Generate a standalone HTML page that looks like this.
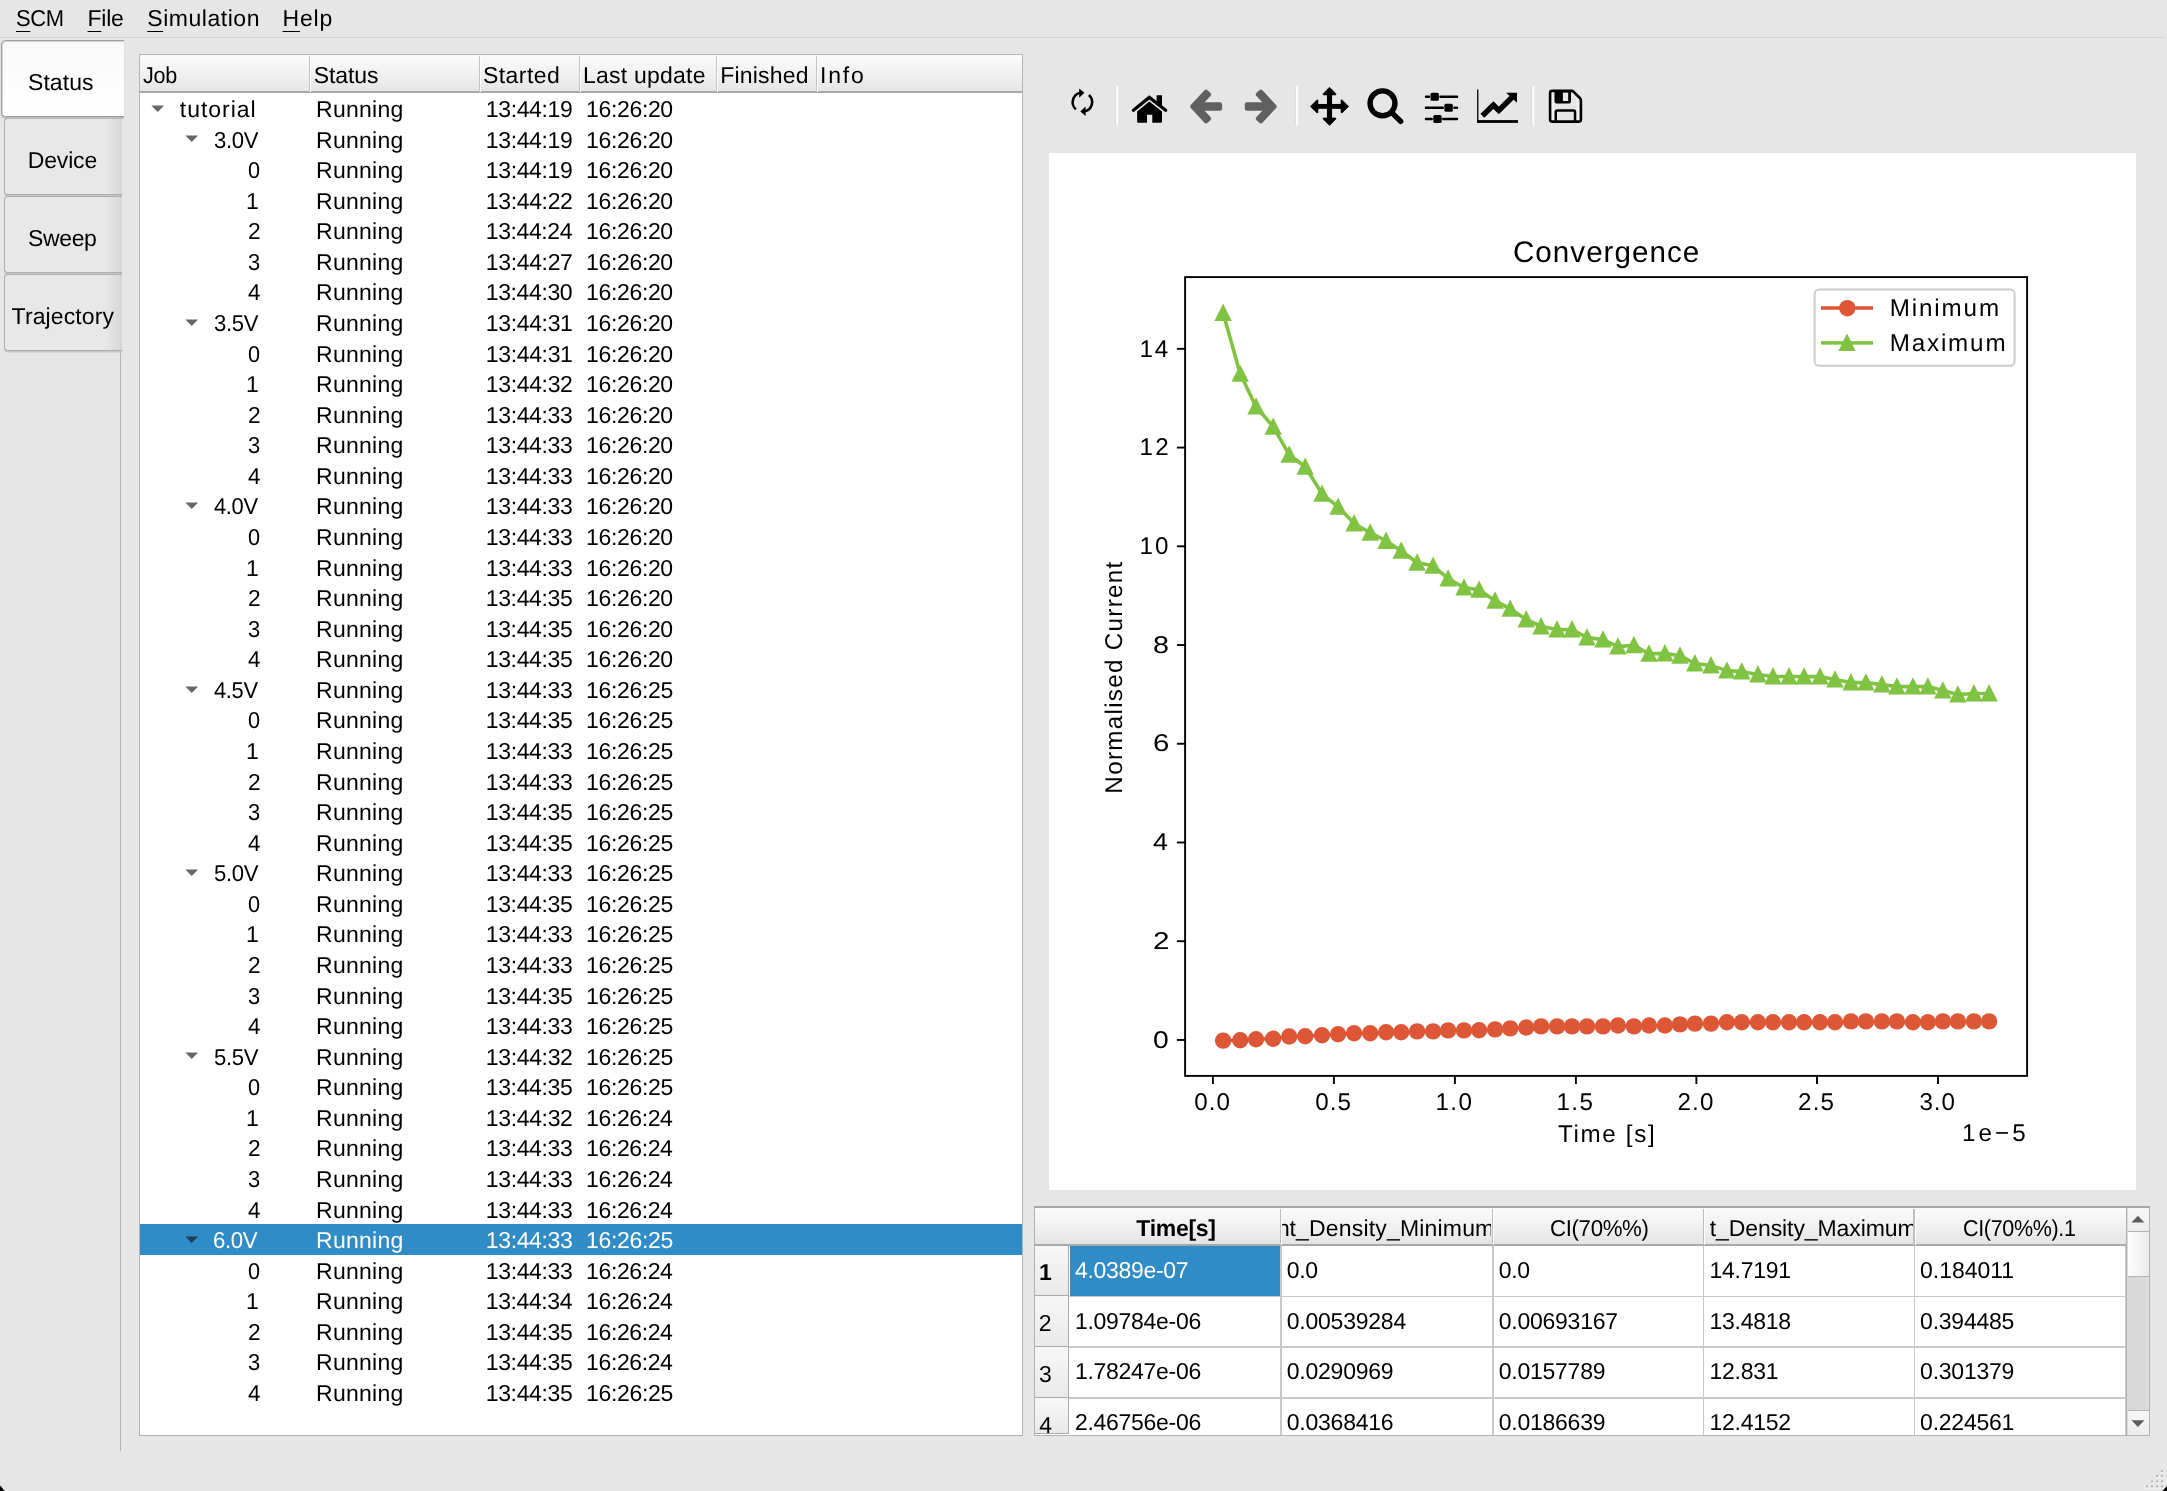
<!DOCTYPE html>
<html><head><meta charset="utf-8"><title>SCM</title>
<style>
html,body{margin:0;padding:0;background:#e6e6e6;}
body{will-change:transform;text-rendering:geometricPrecision;width:2167px;height:1491px;overflow:hidden;background:#e6e6e6;position:relative;font-family:"Liberation Sans",sans-serif;color:#000;}
.t{position:absolute;white-space:pre;}
.a{position:absolute;}
u{text-decoration:underline;text-decoration-thickness:1.4px;text-underline-offset:5.2px;}
</style></head><body>

<div class="a" style="left:0;top:37px;width:2166px;height:1px;background:#d4d4d4"></div>
<div class="t" style="left:16.41px;top:3.23px;font-size:23.0px;line-height:30px;letter-spacing:-0.350px;transform:scaleX(0.9549);transform-origin:0 0;"><u>S</u>CM</div>
<div class="t" style="left:87.56px;top:3.23px;font-size:23.0px;line-height:30px;letter-spacing:-0.237px;"><u>F</u>ile</div>
<div class="t" style="left:147.27px;top:3.23px;font-size:23.0px;line-height:30px;letter-spacing:0.536px;"><u>S</u>imulation</div>
<div class="t" style="left:282.56px;top:3.23px;font-size:23.0px;line-height:30px;letter-spacing:0.832px;"><u>H</u>elp</div>
<div class="a" style="left:120.2px;top:117px;width:1.1px;height:1334px;background:#b2b2b2"></div>
<div class="a" style="left:4px;top:118.4px;width:116.5px;height:74.5px;border:1px solid #adadad;border-right:none;border-radius:4px 0 0 4px;background:linear-gradient(90deg,#e8e8e8 0,#e8e8e8 86%,#d6d6d6 100%);box-shadow:0 1.5px 0 #c6c6c6"></div>
<div class="t" style="left:27.76px;top:144.83px;font-size:23.0px;line-height:30px;letter-spacing:-0.169px;">Device</div>
<div class="a" style="left:4px;top:196.4px;width:116.5px;height:74.5px;border:1px solid #adadad;border-right:none;border-radius:4px 0 0 4px;background:linear-gradient(90deg,#e8e8e8 0,#e8e8e8 86%,#d6d6d6 100%);box-shadow:0 1.5px 0 #c6c6c6"></div>
<div class="t" style="left:28.07px;top:222.83px;font-size:23.0px;line-height:30px;letter-spacing:-0.392px;">Sweep</div>
<div class="a" style="left:4px;top:274.4px;width:116.5px;height:74.5px;border:1px solid #adadad;border-right:none;border-radius:4px 0 0 4px;background:linear-gradient(90deg,#e8e8e8 0,#e8e8e8 86%,#d6d6d6 100%);box-shadow:0 1.5px 0 #c6c6c6"></div>
<div class="t" style="left:11.59px;top:300.83px;font-size:23.0px;line-height:30px;letter-spacing:0.110px;">Trajectory</div>
<div class="a" style="left:1px;top:40px;width:122px;height:75px;border:1px solid #9e9e9e;border-right:none;border-radius:5px 0 0 5px;background:linear-gradient(180deg,#f9f9f9,#ffffff);box-shadow:0 1.5px 1px #bdbdbd, inset 1px 1px 0 rgba(150,150,150,.35)"></div>
<div class="t" style="left:27.96px;top:66.83px;font-size:23.0px;line-height:30px;letter-spacing:0.087px;">Status</div>
<div class="a" style="left:139px;top:54px;width:882px;height:1379.6px;border:1px solid #b4b4b4;background:#fff"></div>
<div class="a" style="left:140px;top:55px;width:882px;height:36px;background:linear-gradient(180deg,#fbfbfb 0,#f1f1f1 50%,#e6e6e6 100%);border-bottom:2px solid #a8a8a8"></div>
<div class="a" style="left:308.8px;top:56px;width:1px;height:36px;background:#c4c4c4"></div>
<div class="a" style="left:309.8px;top:56px;width:1px;height:36px;background:#fdfdfd"></div>
<div class="a" style="left:478.5px;top:56px;width:1px;height:36px;background:#c4c4c4"></div>
<div class="a" style="left:479.5px;top:56px;width:1px;height:36px;background:#fdfdfd"></div>
<div class="a" style="left:579.0px;top:56px;width:1px;height:36px;background:#c4c4c4"></div>
<div class="a" style="left:580.0px;top:56px;width:1px;height:36px;background:#fdfdfd"></div>
<div class="a" style="left:715.9px;top:56px;width:1px;height:36px;background:#c4c4c4"></div>
<div class="a" style="left:716.9px;top:56px;width:1px;height:36px;background:#fdfdfd"></div>
<div class="a" style="left:815.9px;top:56px;width:1px;height:36px;background:#c4c4c4"></div>
<div class="a" style="left:816.9px;top:56px;width:1px;height:36px;background:#fdfdfd"></div>
<div class="t" style="left:142.88px;top:60.03px;font-size:23.0px;line-height:30px;letter-spacing:-0.350px;transform:scaleX(0.9383);transform-origin:0 0;">Job</div>
<div class="t" style="left:313.76px;top:60.03px;font-size:23.0px;line-height:30px;letter-spacing:-0.073px;">Status</div>
<div class="t" style="left:482.96px;top:60.03px;font-size:23.0px;line-height:30px;letter-spacing:0.459px;">Started</div>
<div class="t" style="left:582.96px;top:60.03px;font-size:23.0px;line-height:30px;letter-spacing:0.234px;">Last update</div>
<div class="t" style="left:720.36px;top:60.03px;font-size:23.0px;line-height:30px;letter-spacing:0.162px;">Finished</div>
<div class="t" style="left:820.03px;top:60.03px;font-size:23.0px;line-height:30px;letter-spacing:1.812px;">Info</div>
<svg class="a" style="left:150.2px;top:104.80px" width="15" height="8"><path d="M1.4 0.4 L14.1 0.4 L7.75 6.9 Z" fill="#666"/></svg>
<div class="t" style="left:179.85px;top:94.03px;font-size:23.0px;line-height:30px;letter-spacing:0.969px;">tutorial</div>
<div class="t" style="left:316.01px;top:94.03px;font-size:23.0px;line-height:30px;letter-spacing:0.275px;">Running</div>
<div class="t" style="left:485.77px;top:94.03px;font-size:23.0px;line-height:30px;letter-spacing:-0.353px;">13:44:19</div>
<div class="t" style="left:586.12px;top:94.03px;font-size:23.0px;line-height:30px;letter-spacing:-0.356px;">16:26:20</div>
<svg class="a" style="left:184.15px;top:135.37px" width="15" height="8"><path d="M1.4 0.4 L14.1 0.4 L7.75 6.9 Z" fill="#666"/></svg>
<div class="t" style="left:213.57px;top:124.60px;font-size:23.0px;line-height:30px;letter-spacing:-0.350px;transform:scaleX(0.9593);transform-origin:0 0;">3.0V</div>
<div class="t" style="left:316.01px;top:124.60px;font-size:23.0px;line-height:30px;letter-spacing:0.275px;">Running</div>
<div class="t" style="left:485.77px;top:124.60px;font-size:23.0px;line-height:30px;letter-spacing:-0.353px;">13:44:19</div>
<div class="t" style="left:586.12px;top:124.60px;font-size:23.0px;line-height:30px;letter-spacing:-0.356px;">16:26:20</div>
<div class="t" style="left:247.99px;top:155.17px;font-size:23.0px;line-height:30px;transform:scaleX(0.9420);transform-origin:0 0;">0</div>
<div class="t" style="left:316.01px;top:155.17px;font-size:23.0px;line-height:30px;letter-spacing:0.275px;">Running</div>
<div class="t" style="left:485.77px;top:155.17px;font-size:23.0px;line-height:30px;letter-spacing:-0.353px;">13:44:19</div>
<div class="t" style="left:586.12px;top:155.17px;font-size:23.0px;line-height:30px;letter-spacing:-0.356px;">16:26:20</div>
<div class="t" style="left:245.88px;top:185.74px;font-size:23.0px;line-height:30px;">1</div>
<div class="t" style="left:316.01px;top:185.74px;font-size:23.0px;line-height:30px;letter-spacing:0.275px;">Running</div>
<div class="t" style="left:485.77px;top:185.74px;font-size:23.0px;line-height:30px;letter-spacing:-0.344px;">13:44:22</div>
<div class="t" style="left:586.12px;top:185.74px;font-size:23.0px;line-height:30px;letter-spacing:-0.356px;">16:26:20</div>
<div class="t" style="left:247.66px;top:216.31px;font-size:23.0px;line-height:30px;transform:scaleX(0.9884);transform-origin:0 0;">2</div>
<div class="t" style="left:316.01px;top:216.31px;font-size:23.0px;line-height:30px;letter-spacing:0.275px;">Running</div>
<div class="t" style="left:485.77px;top:216.31px;font-size:23.0px;line-height:30px;letter-spacing:-0.410px;">13:44:24</div>
<div class="t" style="left:586.12px;top:216.31px;font-size:23.0px;line-height:30px;letter-spacing:-0.356px;">16:26:20</div>
<div class="t" style="left:247.98px;top:246.88px;font-size:23.0px;line-height:30px;transform:scaleX(0.9519);transform-origin:0 0;">3</div>
<div class="t" style="left:316.01px;top:246.88px;font-size:23.0px;line-height:30px;letter-spacing:0.275px;">Running</div>
<div class="t" style="left:485.77px;top:246.88px;font-size:23.0px;line-height:30px;letter-spacing:-0.344px;">13:44:27</div>
<div class="t" style="left:586.12px;top:246.88px;font-size:23.0px;line-height:30px;letter-spacing:-0.356px;">16:26:20</div>
<div class="t" style="left:247.80px;top:277.45px;font-size:23.0px;line-height:30px;transform:scaleX(0.9729);transform-origin:0 0;">4</div>
<div class="t" style="left:316.01px;top:277.45px;font-size:23.0px;line-height:30px;letter-spacing:0.275px;">Running</div>
<div class="t" style="left:485.77px;top:277.45px;font-size:23.0px;line-height:30px;letter-spacing:-0.377px;">13:44:30</div>
<div class="t" style="left:586.12px;top:277.45px;font-size:23.0px;line-height:30px;letter-spacing:-0.356px;">16:26:20</div>
<svg class="a" style="left:184.15px;top:318.79px" width="15" height="8"><path d="M1.4 0.4 L14.1 0.4 L7.75 6.9 Z" fill="#666"/></svg>
<div class="t" style="left:213.57px;top:308.02px;font-size:23.0px;line-height:30px;letter-spacing:-0.350px;transform:scaleX(0.9593);transform-origin:0 0;">3.5V</div>
<div class="t" style="left:316.01px;top:308.02px;font-size:23.0px;line-height:30px;letter-spacing:0.275px;">Running</div>
<div class="t" style="left:485.77px;top:308.02px;font-size:23.0px;line-height:30px;letter-spacing:-0.344px;">13:44:31</div>
<div class="t" style="left:586.12px;top:308.02px;font-size:23.0px;line-height:30px;letter-spacing:-0.356px;">16:26:20</div>
<div class="t" style="left:247.99px;top:338.59px;font-size:23.0px;line-height:30px;transform:scaleX(0.9420);transform-origin:0 0;">0</div>
<div class="t" style="left:316.01px;top:338.59px;font-size:23.0px;line-height:30px;letter-spacing:0.275px;">Running</div>
<div class="t" style="left:485.77px;top:338.59px;font-size:23.0px;line-height:30px;letter-spacing:-0.344px;">13:44:31</div>
<div class="t" style="left:586.12px;top:338.59px;font-size:23.0px;line-height:30px;letter-spacing:-0.356px;">16:26:20</div>
<div class="t" style="left:245.88px;top:369.16px;font-size:23.0px;line-height:30px;">1</div>
<div class="t" style="left:316.01px;top:369.16px;font-size:23.0px;line-height:30px;letter-spacing:0.275px;">Running</div>
<div class="t" style="left:485.77px;top:369.16px;font-size:23.0px;line-height:30px;letter-spacing:-0.344px;">13:44:32</div>
<div class="t" style="left:586.12px;top:369.16px;font-size:23.0px;line-height:30px;letter-spacing:-0.356px;">16:26:20</div>
<div class="t" style="left:247.66px;top:399.73px;font-size:23.0px;line-height:30px;transform:scaleX(0.9884);transform-origin:0 0;">2</div>
<div class="t" style="left:316.01px;top:399.73px;font-size:23.0px;line-height:30px;letter-spacing:0.275px;">Running</div>
<div class="t" style="left:485.77px;top:399.73px;font-size:23.0px;line-height:30px;letter-spacing:-0.361px;">13:44:33</div>
<div class="t" style="left:586.12px;top:399.73px;font-size:23.0px;line-height:30px;letter-spacing:-0.356px;">16:26:20</div>
<div class="t" style="left:247.98px;top:430.30px;font-size:23.0px;line-height:30px;transform:scaleX(0.9519);transform-origin:0 0;">3</div>
<div class="t" style="left:316.01px;top:430.30px;font-size:23.0px;line-height:30px;letter-spacing:0.275px;">Running</div>
<div class="t" style="left:485.77px;top:430.30px;font-size:23.0px;line-height:30px;letter-spacing:-0.361px;">13:44:33</div>
<div class="t" style="left:586.12px;top:430.30px;font-size:23.0px;line-height:30px;letter-spacing:-0.356px;">16:26:20</div>
<div class="t" style="left:247.80px;top:460.87px;font-size:23.0px;line-height:30px;transform:scaleX(0.9729);transform-origin:0 0;">4</div>
<div class="t" style="left:316.01px;top:460.87px;font-size:23.0px;line-height:30px;letter-spacing:0.275px;">Running</div>
<div class="t" style="left:485.77px;top:460.87px;font-size:23.0px;line-height:30px;letter-spacing:-0.361px;">13:44:33</div>
<div class="t" style="left:586.12px;top:460.87px;font-size:23.0px;line-height:30px;letter-spacing:-0.356px;">16:26:20</div>
<svg class="a" style="left:184.15px;top:502.21px" width="15" height="8"><path d="M1.4 0.4 L14.1 0.4 L7.75 6.9 Z" fill="#666"/></svg>
<div class="t" style="left:213.91px;top:491.44px;font-size:23.0px;line-height:30px;letter-spacing:-0.350px;transform:scaleX(0.9520);transform-origin:0 0;">4.0V</div>
<div class="t" style="left:316.01px;top:491.44px;font-size:23.0px;line-height:30px;letter-spacing:0.275px;">Running</div>
<div class="t" style="left:485.77px;top:491.44px;font-size:23.0px;line-height:30px;letter-spacing:-0.361px;">13:44:33</div>
<div class="t" style="left:586.12px;top:491.44px;font-size:23.0px;line-height:30px;letter-spacing:-0.356px;">16:26:20</div>
<div class="t" style="left:247.99px;top:522.01px;font-size:23.0px;line-height:30px;transform:scaleX(0.9420);transform-origin:0 0;">0</div>
<div class="t" style="left:316.01px;top:522.01px;font-size:23.0px;line-height:30px;letter-spacing:0.275px;">Running</div>
<div class="t" style="left:485.77px;top:522.01px;font-size:23.0px;line-height:30px;letter-spacing:-0.361px;">13:44:33</div>
<div class="t" style="left:586.12px;top:522.01px;font-size:23.0px;line-height:30px;letter-spacing:-0.356px;">16:26:20</div>
<div class="t" style="left:245.88px;top:552.58px;font-size:23.0px;line-height:30px;">1</div>
<div class="t" style="left:316.01px;top:552.58px;font-size:23.0px;line-height:30px;letter-spacing:0.275px;">Running</div>
<div class="t" style="left:485.77px;top:552.58px;font-size:23.0px;line-height:30px;letter-spacing:-0.361px;">13:44:33</div>
<div class="t" style="left:586.12px;top:552.58px;font-size:23.0px;line-height:30px;letter-spacing:-0.356px;">16:26:20</div>
<div class="t" style="left:247.66px;top:583.15px;font-size:23.0px;line-height:30px;transform:scaleX(0.9884);transform-origin:0 0;">2</div>
<div class="t" style="left:316.01px;top:583.15px;font-size:23.0px;line-height:30px;letter-spacing:0.275px;">Running</div>
<div class="t" style="left:485.77px;top:583.15px;font-size:23.0px;line-height:30px;letter-spacing:-0.369px;">13:44:35</div>
<div class="t" style="left:586.12px;top:583.15px;font-size:23.0px;line-height:30px;letter-spacing:-0.356px;">16:26:20</div>
<div class="t" style="left:247.98px;top:613.72px;font-size:23.0px;line-height:30px;transform:scaleX(0.9519);transform-origin:0 0;">3</div>
<div class="t" style="left:316.01px;top:613.72px;font-size:23.0px;line-height:30px;letter-spacing:0.275px;">Running</div>
<div class="t" style="left:485.77px;top:613.72px;font-size:23.0px;line-height:30px;letter-spacing:-0.369px;">13:44:35</div>
<div class="t" style="left:586.12px;top:613.72px;font-size:23.0px;line-height:30px;letter-spacing:-0.356px;">16:26:20</div>
<div class="t" style="left:247.80px;top:644.29px;font-size:23.0px;line-height:30px;transform:scaleX(0.9729);transform-origin:0 0;">4</div>
<div class="t" style="left:316.01px;top:644.29px;font-size:23.0px;line-height:30px;letter-spacing:0.275px;">Running</div>
<div class="t" style="left:485.77px;top:644.29px;font-size:23.0px;line-height:30px;letter-spacing:-0.369px;">13:44:35</div>
<div class="t" style="left:586.12px;top:644.29px;font-size:23.0px;line-height:30px;letter-spacing:-0.356px;">16:26:20</div>
<svg class="a" style="left:184.15px;top:685.63px" width="15" height="8"><path d="M1.4 0.4 L14.1 0.4 L7.75 6.9 Z" fill="#666"/></svg>
<div class="t" style="left:213.91px;top:674.86px;font-size:23.0px;line-height:30px;letter-spacing:-0.350px;transform:scaleX(0.9520);transform-origin:0 0;">4.5V</div>
<div class="t" style="left:316.01px;top:674.86px;font-size:23.0px;line-height:30px;letter-spacing:0.275px;">Running</div>
<div class="t" style="left:485.77px;top:674.86px;font-size:23.0px;line-height:30px;letter-spacing:-0.361px;">13:44:33</div>
<div class="t" style="left:586.12px;top:674.86px;font-size:23.0px;line-height:30px;letter-spacing:-0.348px;">16:26:25</div>
<div class="t" style="left:247.99px;top:705.43px;font-size:23.0px;line-height:30px;transform:scaleX(0.9420);transform-origin:0 0;">0</div>
<div class="t" style="left:316.01px;top:705.43px;font-size:23.0px;line-height:30px;letter-spacing:0.275px;">Running</div>
<div class="t" style="left:485.77px;top:705.43px;font-size:23.0px;line-height:30px;letter-spacing:-0.369px;">13:44:35</div>
<div class="t" style="left:586.12px;top:705.43px;font-size:23.0px;line-height:30px;letter-spacing:-0.348px;">16:26:25</div>
<div class="t" style="left:245.88px;top:736.00px;font-size:23.0px;line-height:30px;">1</div>
<div class="t" style="left:316.01px;top:736.00px;font-size:23.0px;line-height:30px;letter-spacing:0.275px;">Running</div>
<div class="t" style="left:485.77px;top:736.00px;font-size:23.0px;line-height:30px;letter-spacing:-0.361px;">13:44:33</div>
<div class="t" style="left:586.12px;top:736.00px;font-size:23.0px;line-height:30px;letter-spacing:-0.348px;">16:26:25</div>
<div class="t" style="left:247.66px;top:766.57px;font-size:23.0px;line-height:30px;transform:scaleX(0.9884);transform-origin:0 0;">2</div>
<div class="t" style="left:316.01px;top:766.57px;font-size:23.0px;line-height:30px;letter-spacing:0.275px;">Running</div>
<div class="t" style="left:485.77px;top:766.57px;font-size:23.0px;line-height:30px;letter-spacing:-0.361px;">13:44:33</div>
<div class="t" style="left:586.12px;top:766.57px;font-size:23.0px;line-height:30px;letter-spacing:-0.348px;">16:26:25</div>
<div class="t" style="left:247.98px;top:797.14px;font-size:23.0px;line-height:30px;transform:scaleX(0.9519);transform-origin:0 0;">3</div>
<div class="t" style="left:316.01px;top:797.14px;font-size:23.0px;line-height:30px;letter-spacing:0.275px;">Running</div>
<div class="t" style="left:485.77px;top:797.14px;font-size:23.0px;line-height:30px;letter-spacing:-0.369px;">13:44:35</div>
<div class="t" style="left:586.12px;top:797.14px;font-size:23.0px;line-height:30px;letter-spacing:-0.348px;">16:26:25</div>
<div class="t" style="left:247.80px;top:827.71px;font-size:23.0px;line-height:30px;transform:scaleX(0.9729);transform-origin:0 0;">4</div>
<div class="t" style="left:316.01px;top:827.71px;font-size:23.0px;line-height:30px;letter-spacing:0.275px;">Running</div>
<div class="t" style="left:485.77px;top:827.71px;font-size:23.0px;line-height:30px;letter-spacing:-0.369px;">13:44:35</div>
<div class="t" style="left:586.12px;top:827.71px;font-size:23.0px;line-height:30px;letter-spacing:-0.348px;">16:26:25</div>
<svg class="a" style="left:184.15px;top:869.05px" width="15" height="8"><path d="M1.4 0.4 L14.1 0.4 L7.75 6.9 Z" fill="#666"/></svg>
<div class="t" style="left:213.52px;top:858.28px;font-size:23.0px;line-height:30px;letter-spacing:-0.350px;transform:scaleX(0.9605);transform-origin:0 0;">5.0V</div>
<div class="t" style="left:316.01px;top:858.28px;font-size:23.0px;line-height:30px;letter-spacing:0.275px;">Running</div>
<div class="t" style="left:485.77px;top:858.28px;font-size:23.0px;line-height:30px;letter-spacing:-0.361px;">13:44:33</div>
<div class="t" style="left:586.12px;top:858.28px;font-size:23.0px;line-height:30px;letter-spacing:-0.348px;">16:26:25</div>
<div class="t" style="left:247.99px;top:888.85px;font-size:23.0px;line-height:30px;transform:scaleX(0.9420);transform-origin:0 0;">0</div>
<div class="t" style="left:316.01px;top:888.85px;font-size:23.0px;line-height:30px;letter-spacing:0.275px;">Running</div>
<div class="t" style="left:485.77px;top:888.85px;font-size:23.0px;line-height:30px;letter-spacing:-0.369px;">13:44:35</div>
<div class="t" style="left:586.12px;top:888.85px;font-size:23.0px;line-height:30px;letter-spacing:-0.348px;">16:26:25</div>
<div class="t" style="left:245.88px;top:919.42px;font-size:23.0px;line-height:30px;">1</div>
<div class="t" style="left:316.01px;top:919.42px;font-size:23.0px;line-height:30px;letter-spacing:0.275px;">Running</div>
<div class="t" style="left:485.77px;top:919.42px;font-size:23.0px;line-height:30px;letter-spacing:-0.361px;">13:44:33</div>
<div class="t" style="left:586.12px;top:919.42px;font-size:23.0px;line-height:30px;letter-spacing:-0.348px;">16:26:25</div>
<div class="t" style="left:247.66px;top:949.99px;font-size:23.0px;line-height:30px;transform:scaleX(0.9884);transform-origin:0 0;">2</div>
<div class="t" style="left:316.01px;top:949.99px;font-size:23.0px;line-height:30px;letter-spacing:0.275px;">Running</div>
<div class="t" style="left:485.77px;top:949.99px;font-size:23.0px;line-height:30px;letter-spacing:-0.361px;">13:44:33</div>
<div class="t" style="left:586.12px;top:949.99px;font-size:23.0px;line-height:30px;letter-spacing:-0.348px;">16:26:25</div>
<div class="t" style="left:247.98px;top:980.56px;font-size:23.0px;line-height:30px;transform:scaleX(0.9519);transform-origin:0 0;">3</div>
<div class="t" style="left:316.01px;top:980.56px;font-size:23.0px;line-height:30px;letter-spacing:0.275px;">Running</div>
<div class="t" style="left:485.77px;top:980.56px;font-size:23.0px;line-height:30px;letter-spacing:-0.369px;">13:44:35</div>
<div class="t" style="left:586.12px;top:980.56px;font-size:23.0px;line-height:30px;letter-spacing:-0.348px;">16:26:25</div>
<div class="t" style="left:247.80px;top:1011.13px;font-size:23.0px;line-height:30px;transform:scaleX(0.9729);transform-origin:0 0;">4</div>
<div class="t" style="left:316.01px;top:1011.13px;font-size:23.0px;line-height:30px;letter-spacing:0.275px;">Running</div>
<div class="t" style="left:485.77px;top:1011.13px;font-size:23.0px;line-height:30px;letter-spacing:-0.361px;">13:44:33</div>
<div class="t" style="left:586.12px;top:1011.13px;font-size:23.0px;line-height:30px;letter-spacing:-0.348px;">16:26:25</div>
<svg class="a" style="left:184.15px;top:1052.47px" width="15" height="8"><path d="M1.4 0.4 L14.1 0.4 L7.75 6.9 Z" fill="#666"/></svg>
<div class="t" style="left:213.52px;top:1041.70px;font-size:23.0px;line-height:30px;letter-spacing:-0.350px;transform:scaleX(0.9605);transform-origin:0 0;">5.5V</div>
<div class="t" style="left:316.01px;top:1041.70px;font-size:23.0px;line-height:30px;letter-spacing:0.275px;">Running</div>
<div class="t" style="left:485.77px;top:1041.70px;font-size:23.0px;line-height:30px;letter-spacing:-0.344px;">13:44:32</div>
<div class="t" style="left:586.12px;top:1041.70px;font-size:23.0px;line-height:30px;letter-spacing:-0.348px;">16:26:25</div>
<div class="t" style="left:247.99px;top:1072.27px;font-size:23.0px;line-height:30px;transform:scaleX(0.9420);transform-origin:0 0;">0</div>
<div class="t" style="left:316.01px;top:1072.27px;font-size:23.0px;line-height:30px;letter-spacing:0.275px;">Running</div>
<div class="t" style="left:485.77px;top:1072.27px;font-size:23.0px;line-height:30px;letter-spacing:-0.369px;">13:44:35</div>
<div class="t" style="left:586.12px;top:1072.27px;font-size:23.0px;line-height:30px;letter-spacing:-0.348px;">16:26:25</div>
<div class="t" style="left:245.88px;top:1102.84px;font-size:23.0px;line-height:30px;">1</div>
<div class="t" style="left:316.01px;top:1102.84px;font-size:23.0px;line-height:30px;letter-spacing:0.275px;">Running</div>
<div class="t" style="left:485.77px;top:1102.84px;font-size:23.0px;line-height:30px;letter-spacing:-0.344px;">13:44:32</div>
<div class="t" style="left:586.12px;top:1102.84px;font-size:23.0px;line-height:30px;letter-spacing:-0.389px;">16:26:24</div>
<div class="t" style="left:247.66px;top:1133.41px;font-size:23.0px;line-height:30px;transform:scaleX(0.9884);transform-origin:0 0;">2</div>
<div class="t" style="left:316.01px;top:1133.41px;font-size:23.0px;line-height:30px;letter-spacing:0.275px;">Running</div>
<div class="t" style="left:485.77px;top:1133.41px;font-size:23.0px;line-height:30px;letter-spacing:-0.361px;">13:44:33</div>
<div class="t" style="left:586.12px;top:1133.41px;font-size:23.0px;line-height:30px;letter-spacing:-0.389px;">16:26:24</div>
<div class="t" style="left:247.98px;top:1163.98px;font-size:23.0px;line-height:30px;transform:scaleX(0.9519);transform-origin:0 0;">3</div>
<div class="t" style="left:316.01px;top:1163.98px;font-size:23.0px;line-height:30px;letter-spacing:0.275px;">Running</div>
<div class="t" style="left:485.77px;top:1163.98px;font-size:23.0px;line-height:30px;letter-spacing:-0.361px;">13:44:33</div>
<div class="t" style="left:586.12px;top:1163.98px;font-size:23.0px;line-height:30px;letter-spacing:-0.389px;">16:26:24</div>
<div class="t" style="left:247.80px;top:1194.55px;font-size:23.0px;line-height:30px;transform:scaleX(0.9729);transform-origin:0 0;">4</div>
<div class="t" style="left:316.01px;top:1194.55px;font-size:23.0px;line-height:30px;letter-spacing:0.275px;">Running</div>
<div class="t" style="left:485.77px;top:1194.55px;font-size:23.0px;line-height:30px;letter-spacing:-0.361px;">13:44:33</div>
<div class="t" style="left:586.12px;top:1194.55px;font-size:23.0px;line-height:30px;letter-spacing:-0.389px;">16:26:24</div>
<div class="a" style="left:140px;top:1224.09px;width:882px;height:31.37px;background:#308cc6"></div>
<svg class="a" style="left:184.15px;top:1235.89px" width="15" height="8"><path d="M1.4 0.4 L14.1 0.4 L7.75 6.9 Z" fill="#1d3f58"/></svg>
<div class="t" style="left:213.29px;top:1225.12px;font-size:23.0px;line-height:30px;letter-spacing:-0.350px;transform:scaleX(0.9654);transform-origin:0 0;color:#fff;">6.0V</div>
<div class="t" style="left:316.01px;top:1225.12px;font-size:23.0px;line-height:30px;letter-spacing:0.275px;color:#fff;">Running</div>
<div class="t" style="left:485.77px;top:1225.12px;font-size:23.0px;line-height:30px;letter-spacing:-0.361px;color:#fff;">13:44:33</div>
<div class="t" style="left:586.12px;top:1225.12px;font-size:23.0px;line-height:30px;letter-spacing:-0.348px;color:#fff;">16:26:25</div>
<div class="t" style="left:247.99px;top:1255.69px;font-size:23.0px;line-height:30px;transform:scaleX(0.9420);transform-origin:0 0;">0</div>
<div class="t" style="left:316.01px;top:1255.69px;font-size:23.0px;line-height:30px;letter-spacing:0.275px;">Running</div>
<div class="t" style="left:485.77px;top:1255.69px;font-size:23.0px;line-height:30px;letter-spacing:-0.361px;">13:44:33</div>
<div class="t" style="left:586.12px;top:1255.69px;font-size:23.0px;line-height:30px;letter-spacing:-0.389px;">16:26:24</div>
<div class="t" style="left:245.88px;top:1286.26px;font-size:23.0px;line-height:30px;">1</div>
<div class="t" style="left:316.01px;top:1286.26px;font-size:23.0px;line-height:30px;letter-spacing:0.275px;">Running</div>
<div class="t" style="left:485.77px;top:1286.26px;font-size:23.0px;line-height:30px;letter-spacing:-0.410px;">13:44:34</div>
<div class="t" style="left:586.12px;top:1286.26px;font-size:23.0px;line-height:30px;letter-spacing:-0.389px;">16:26:24</div>
<div class="t" style="left:247.66px;top:1316.83px;font-size:23.0px;line-height:30px;transform:scaleX(0.9884);transform-origin:0 0;">2</div>
<div class="t" style="left:316.01px;top:1316.83px;font-size:23.0px;line-height:30px;letter-spacing:0.275px;">Running</div>
<div class="t" style="left:485.77px;top:1316.83px;font-size:23.0px;line-height:30px;letter-spacing:-0.369px;">13:44:35</div>
<div class="t" style="left:586.12px;top:1316.83px;font-size:23.0px;line-height:30px;letter-spacing:-0.389px;">16:26:24</div>
<div class="t" style="left:247.98px;top:1347.40px;font-size:23.0px;line-height:30px;transform:scaleX(0.9519);transform-origin:0 0;">3</div>
<div class="t" style="left:316.01px;top:1347.40px;font-size:23.0px;line-height:30px;letter-spacing:0.275px;">Running</div>
<div class="t" style="left:485.77px;top:1347.40px;font-size:23.0px;line-height:30px;letter-spacing:-0.369px;">13:44:35</div>
<div class="t" style="left:586.12px;top:1347.40px;font-size:23.0px;line-height:30px;letter-spacing:-0.389px;">16:26:24</div>
<div class="t" style="left:247.80px;top:1377.97px;font-size:23.0px;line-height:30px;transform:scaleX(0.9729);transform-origin:0 0;">4</div>
<div class="t" style="left:316.01px;top:1377.97px;font-size:23.0px;line-height:30px;letter-spacing:0.275px;">Running</div>
<div class="t" style="left:485.77px;top:1377.97px;font-size:23.0px;line-height:30px;letter-spacing:-0.369px;">13:44:35</div>
<div class="t" style="left:586.12px;top:1377.97px;font-size:23.0px;line-height:30px;letter-spacing:-0.348px;">16:26:25</div>
<svg class="a" style="left:1060px;top:80px" width="540" height="52" viewBox="1060 80 540 52"><rect x="1115.0" y="86" width="1" height="39" fill="#d9d9d9"/><rect x="1116.0" y="86" width="2.2" height="39" fill="#fdfdfd"/><rect x="1294.9" y="86" width="1" height="39" fill="#d9d9d9"/><rect x="1295.9" y="86" width="2.2" height="39" fill="#fdfdfd"/><rect x="1531.2" y="86" width="1" height="39" fill="#d9d9d9"/><rect x="1532.2" y="86" width="2.2" height="39" fill="#fdfdfd"/><g fill="none" stroke="#000" stroke-width="2.5"><path d="M1079.9 92.9 A9.55 9.55 0 0 0 1075.9 109.3"/><path d="M1088.9 95.0 A9.55 9.55 0 0 1 1084.9 111.4"/></g><path d="M1079.2 88.5 L1084.4 92.7 L1079.2 97.8 Z" fill="#000"/><path d="M1085.6 106.5 L1080.3 111.5 L1085.6 115.9 Z" fill="#000"/><path d="M1133.4 110.3 L1149.3 97.4 L1165.7 110.3" fill="none" stroke="#000" stroke-width="3.2" stroke-linecap="round" stroke-linejoin="miter"/><path d="M1156.6 95.3 H1162 V106.4 L1156.6 102 Z" fill="#000"/><path d="M1149.3 101.5 L1162 111.6 V121.6 Q1162 122.7 1160.9 122.7 H1152.3 V114.7 H1147 V122.7 H1138.2 Q1137.1 122.7 1137.1 121.6 V111.6 Z" fill="#000"/><path d="M1192.40 106.50 L1206.09 91.82 L1208.87 94.41 L1197.60 106.50 L1208.87 118.59 L1206.09 121.18 Z" fill="#606060" stroke="#606060" stroke-width="4.4" stroke-linejoin="round"/><rect x="1196.2" y="102.3" width="25.9" height="8.4" rx="2.2" fill="#606060"/><path d="M1274.50 106.50 L1260.81 91.82 L1258.03 94.41 L1269.30 106.50 L1258.03 118.59 L1260.81 121.18 Z" fill="#606060" stroke="#606060" stroke-width="4.4" stroke-linejoin="round"/><rect x="1244.8" y="102.3" width="25.9" height="8.4" rx="2.2" fill="#606060"/><rect x="1326.95" y="92.4" width="5.1" height="28" fill="#000"/><rect x="1315.5" y="103.95" width="28" height="4.9" fill="#000"/><path transform="rotate(0 1329.5 106.4)" d="M1329.5 87.2 L1336.0 93.80000000000001 Q1336.2 94.9 1335.3 94.9 H1323.7 Q1322.8 94.9 1323.0 93.80000000000001 Z" fill="#000" stroke="#000" stroke-width="0.6" stroke-linejoin="round"/><path transform="rotate(90 1329.5 106.4)" d="M1329.5 87.2 L1336.0 93.80000000000001 Q1336.2 94.9 1335.3 94.9 H1323.7 Q1322.8 94.9 1323.0 93.80000000000001 Z" fill="#000" stroke="#000" stroke-width="0.6" stroke-linejoin="round"/><path transform="rotate(180 1329.5 106.4)" d="M1329.5 87.2 L1336.0 93.80000000000001 Q1336.2 94.9 1335.3 94.9 H1323.7 Q1322.8 94.9 1323.0 93.80000000000001 Z" fill="#000" stroke="#000" stroke-width="0.6" stroke-linejoin="round"/><path transform="rotate(270 1329.5 106.4)" d="M1329.5 87.2 L1336.0 93.80000000000001 Q1336.2 94.9 1335.3 94.9 H1323.7 Q1322.8 94.9 1323.0 93.80000000000001 Z" fill="#000" stroke="#000" stroke-width="0.6" stroke-linejoin="round"/><circle cx="1382.5" cy="103.3" r="12.45" fill="none" stroke="#000" stroke-width="5.4"/><path d="M1391.5 112.3 L1400.7 121.4" stroke="#000" stroke-width="5.4" stroke-linecap="round"/><path d="M1426 96.7 H1428.9 M1440.5 96.7 H1457" stroke="#000" stroke-width="2.5" stroke-linecap="round"/><rect x="1430.5" y="92.65" width="8.4" height="8.1" rx="1.6" fill="#000"/><path d="M1426 107.8 H1442.8 M1454.4 107.8 H1457" stroke="#000" stroke-width="2.5" stroke-linecap="round"/><rect x="1444.4" y="103.75" width="8.4" height="8.1" rx="1.6" fill="#000"/><path d="M1426 118.95 H1431.7 M1443.3 118.95 H1457" stroke="#000" stroke-width="2.5" stroke-linecap="round"/><rect x="1433.3" y="114.90" width="8.4" height="8.1" rx="1.6" fill="#000"/><rect x="1477.1" y="89.4" width="1.3" height="33.5" fill="#000"/><rect x="1477.1" y="120.1" width="40.9" height="2.8" fill="#000"/><path d="M1482.4 115.8 L1493.4 105.1 L1498.8 110.4 L1512.6 96.8" fill="none" stroke="#000" stroke-width="5.5" stroke-linejoin="miter"/><path d="M1506.1 92.7 H1517 V102.8 Z" fill="#000"/><path d="M1554.6 104 V91.5 H1571 V104 Z M1557 111.8 H1574 V120 H1557 Z" fill="none"/><rect x="1551.4" y="92" width="3" height="28.3" fill="#f1f1f1"/><rect x="1576.3" y="96" width="3.2" height="24.3" fill="#f1f1f1"/><path d="M1552.1 90.9 H1571.6 Q1572.8 90.9 1573.7 91.8 L1579.8 98 Q1580.9 99.1 1580.9 100.6 V119.6 Q1580.9 121.6 1578.9 121.6 H1552.1 Q1550.1 121.6 1550.1 119.6 V92.9 Q1550.1 90.9 1552.1 90.9 Z" fill="none" stroke="#000" stroke-width="2.6"/><path d="M1554.5 90.5 H1571 V101.6 Q1571 103.6 1569 103.6 H1556.5 Q1554.5 103.6 1554.5 101.6 Z M1562.9 92.4 V101 H1568.2 V92.4 Z" fill="#000" fill-rule="evenodd"/><path d="M1555.75 121 V112 Q1555.75 110.45 1557.3 110.45 H1573.5 Q1575.05 110.45 1575.05 112 V121" fill="none" stroke="#000" stroke-width="2.5"/></svg>
<div class="a" style="left:1049px;top:153px;width:1087px;height:1037px;background:#fff"></div>
<svg class="a" style="left:1049px;top:153px" width="1087" height="1037" viewBox="1049 153 1087 1037"><polyline fill="none" stroke="#dd5736" stroke-width="3.5" stroke-linejoin="round" points="1223.1,1040.6 1240.2,1040.3 1256.0,1039.2 1273.2,1038.8 1289.2,1036.5 1305.2,1036.3 1322.0,1035.3 1338.1,1034.2 1354.1,1033.3 1370.2,1033.3 1386.1,1032.3 1401.2,1032.3 1417.1,1031.4 1433.1,1031.4 1448.1,1030.4 1464.0,1030.4 1479.1,1030.3 1495.1,1029.4 1510.2,1028.4 1526.2,1027.5 1541.1,1026.4 1557.1,1026.4 1572.0,1026.4 1587.0,1026.4 1603.0,1026.4 1617.9,1025.5 1633.9,1026.4 1649.0,1025.5 1664.9,1025.5 1680.0,1024.4 1694.9,1023.6 1711.0,1023.6 1726.9,1022.3 1741.8,1022.3 1757.9,1022.3 1773.0,1022.3 1789.0,1022.3 1804.1,1022.3 1820.0,1022.3 1835.0,1022.3 1851.0,1021.4 1865.9,1021.4 1881.9,1021.4 1896.9,1021.4 1912.9,1022.3 1927.9,1022.3 1942.9,1021.4 1957.9,1021.4 1973.9,1021.4 1989.1,1021.4"/><circle cx="1223.1" cy="1040.6" r="8.2" fill="#dd5736"/><circle cx="1240.2" cy="1040.3" r="8.2" fill="#dd5736"/><circle cx="1256.0" cy="1039.2" r="8.2" fill="#dd5736"/><circle cx="1273.2" cy="1038.8" r="8.2" fill="#dd5736"/><circle cx="1289.2" cy="1036.5" r="8.2" fill="#dd5736"/><circle cx="1305.2" cy="1036.3" r="8.2" fill="#dd5736"/><circle cx="1322.0" cy="1035.3" r="8.2" fill="#dd5736"/><circle cx="1338.1" cy="1034.2" r="8.2" fill="#dd5736"/><circle cx="1354.1" cy="1033.3" r="8.2" fill="#dd5736"/><circle cx="1370.2" cy="1033.3" r="8.2" fill="#dd5736"/><circle cx="1386.1" cy="1032.3" r="8.2" fill="#dd5736"/><circle cx="1401.2" cy="1032.3" r="8.2" fill="#dd5736"/><circle cx="1417.1" cy="1031.4" r="8.2" fill="#dd5736"/><circle cx="1433.1" cy="1031.4" r="8.2" fill="#dd5736"/><circle cx="1448.1" cy="1030.4" r="8.2" fill="#dd5736"/><circle cx="1464.0" cy="1030.4" r="8.2" fill="#dd5736"/><circle cx="1479.1" cy="1030.3" r="8.2" fill="#dd5736"/><circle cx="1495.1" cy="1029.4" r="8.2" fill="#dd5736"/><circle cx="1510.2" cy="1028.4" r="8.2" fill="#dd5736"/><circle cx="1526.2" cy="1027.5" r="8.2" fill="#dd5736"/><circle cx="1541.1" cy="1026.4" r="8.2" fill="#dd5736"/><circle cx="1557.1" cy="1026.4" r="8.2" fill="#dd5736"/><circle cx="1572.0" cy="1026.4" r="8.2" fill="#dd5736"/><circle cx="1587.0" cy="1026.4" r="8.2" fill="#dd5736"/><circle cx="1603.0" cy="1026.4" r="8.2" fill="#dd5736"/><circle cx="1617.9" cy="1025.5" r="8.2" fill="#dd5736"/><circle cx="1633.9" cy="1026.4" r="8.2" fill="#dd5736"/><circle cx="1649.0" cy="1025.5" r="8.2" fill="#dd5736"/><circle cx="1664.9" cy="1025.5" r="8.2" fill="#dd5736"/><circle cx="1680.0" cy="1024.4" r="8.2" fill="#dd5736"/><circle cx="1694.9" cy="1023.6" r="8.2" fill="#dd5736"/><circle cx="1711.0" cy="1023.6" r="8.2" fill="#dd5736"/><circle cx="1726.9" cy="1022.3" r="8.2" fill="#dd5736"/><circle cx="1741.8" cy="1022.3" r="8.2" fill="#dd5736"/><circle cx="1757.9" cy="1022.3" r="8.2" fill="#dd5736"/><circle cx="1773.0" cy="1022.3" r="8.2" fill="#dd5736"/><circle cx="1789.0" cy="1022.3" r="8.2" fill="#dd5736"/><circle cx="1804.1" cy="1022.3" r="8.2" fill="#dd5736"/><circle cx="1820.0" cy="1022.3" r="8.2" fill="#dd5736"/><circle cx="1835.0" cy="1022.3" r="8.2" fill="#dd5736"/><circle cx="1851.0" cy="1021.4" r="8.2" fill="#dd5736"/><circle cx="1865.9" cy="1021.4" r="8.2" fill="#dd5736"/><circle cx="1881.9" cy="1021.4" r="8.2" fill="#dd5736"/><circle cx="1896.9" cy="1021.4" r="8.2" fill="#dd5736"/><circle cx="1912.9" cy="1022.3" r="8.2" fill="#dd5736"/><circle cx="1927.9" cy="1022.3" r="8.2" fill="#dd5736"/><circle cx="1942.9" cy="1021.4" r="8.2" fill="#dd5736"/><circle cx="1957.9" cy="1021.4" r="8.2" fill="#dd5736"/><circle cx="1973.9" cy="1021.4" r="8.2" fill="#dd5736"/><circle cx="1989.1" cy="1021.4" r="8.2" fill="#dd5736"/><polyline fill="none" stroke="#80c342" stroke-width="3.6" stroke-linejoin="round" points="1223.1,313.0 1240.2,373.8 1256.0,406.6 1273.2,426.8 1289.2,454.7 1305.2,466.8 1322.0,493.8 1338.1,506.8 1354.1,523.5 1370.2,532.7 1386.1,540.9 1401.2,550.7 1417.1,562.7 1433.1,565.8 1448.1,578.6 1464.0,587.6 1479.1,589.7 1495.1,600.7 1510.2,608.8 1526.2,619.5 1541.1,626.5 1557.1,629.6 1572.0,629.5 1587.0,637.5 1603.0,639.6 1617.9,646.6 1633.9,645.2 1649.0,653.7 1664.9,653.4 1680.0,655.7 1694.9,663.5 1711.0,665.5 1726.9,670.6 1741.8,671.6 1757.9,674.5 1773.0,676.5 1789.0,676.5 1804.1,676.6 1820.0,676.6 1835.0,679.6 1851.0,682.6 1865.9,682.6 1881.9,684.6 1896.9,686.6 1912.9,686.6 1927.9,686.6 1942.9,690.6 1957.9,694.6 1973.9,693.5 1989.1,693.5"/><path d="M1223.1 303.6 L1231.8 321.0 H1214.4 Z" fill="#80c342"/><path d="M1240.2 364.4 L1248.9 381.8 H1231.5 Z" fill="#80c342"/><path d="M1256.0 397.2 L1264.7 414.6 H1247.3 Z" fill="#80c342"/><path d="M1273.2 417.4 L1281.9 434.8 H1264.5 Z" fill="#80c342"/><path d="M1289.2 445.3 L1297.9 462.7 H1280.5 Z" fill="#80c342"/><path d="M1305.2 457.4 L1313.9 474.8 H1296.5 Z" fill="#80c342"/><path d="M1322.0 484.4 L1330.7 501.8 H1313.3 Z" fill="#80c342"/><path d="M1338.1 497.4 L1346.8 514.8 H1329.4 Z" fill="#80c342"/><path d="M1354.1 514.1 L1362.8 531.5 H1345.4 Z" fill="#80c342"/><path d="M1370.2 523.3 L1378.9 540.7 H1361.5 Z" fill="#80c342"/><path d="M1386.1 531.5 L1394.8 548.9 H1377.4 Z" fill="#80c342"/><path d="M1401.2 541.3 L1409.9 558.7 H1392.5 Z" fill="#80c342"/><path d="M1417.1 553.3 L1425.8 570.7 H1408.4 Z" fill="#80c342"/><path d="M1433.1 556.4 L1441.8 573.8 H1424.4 Z" fill="#80c342"/><path d="M1448.1 569.2 L1456.8 586.6 H1439.4 Z" fill="#80c342"/><path d="M1464.0 578.2 L1472.7 595.6 H1455.3 Z" fill="#80c342"/><path d="M1479.1 580.3 L1487.8 597.7 H1470.4 Z" fill="#80c342"/><path d="M1495.1 591.3 L1503.8 608.7 H1486.4 Z" fill="#80c342"/><path d="M1510.2 599.4 L1518.9 616.8 H1501.5 Z" fill="#80c342"/><path d="M1526.2 610.1 L1534.9 627.5 H1517.5 Z" fill="#80c342"/><path d="M1541.1 617.1 L1549.8 634.5 H1532.4 Z" fill="#80c342"/><path d="M1557.1 620.2 L1565.8 637.6 H1548.4 Z" fill="#80c342"/><path d="M1572.0 620.1 L1580.7 637.5 H1563.3 Z" fill="#80c342"/><path d="M1587.0 628.1 L1595.7 645.5 H1578.3 Z" fill="#80c342"/><path d="M1603.0 630.2 L1611.7 647.6 H1594.3 Z" fill="#80c342"/><path d="M1617.9 637.2 L1626.6 654.6 H1609.2 Z" fill="#80c342"/><path d="M1633.9 635.8 L1642.6 653.2 H1625.2 Z" fill="#80c342"/><path d="M1649.0 644.3 L1657.7 661.7 H1640.3 Z" fill="#80c342"/><path d="M1664.9 644.0 L1673.6 661.4 H1656.2 Z" fill="#80c342"/><path d="M1680.0 646.3 L1688.7 663.7 H1671.3 Z" fill="#80c342"/><path d="M1694.9 654.1 L1703.6 671.5 H1686.2 Z" fill="#80c342"/><path d="M1711.0 656.1 L1719.7 673.5 H1702.3 Z" fill="#80c342"/><path d="M1726.9 661.2 L1735.6 678.6 H1718.2 Z" fill="#80c342"/><path d="M1741.8 662.2 L1750.5 679.6 H1733.1 Z" fill="#80c342"/><path d="M1757.9 665.1 L1766.6 682.5 H1749.2 Z" fill="#80c342"/><path d="M1773.0 667.1 L1781.7 684.5 H1764.3 Z" fill="#80c342"/><path d="M1789.0 667.1 L1797.7 684.5 H1780.3 Z" fill="#80c342"/><path d="M1804.1 667.2 L1812.8 684.6 H1795.4 Z" fill="#80c342"/><path d="M1820.0 667.2 L1828.7 684.6 H1811.3 Z" fill="#80c342"/><path d="M1835.0 670.2 L1843.7 687.6 H1826.3 Z" fill="#80c342"/><path d="M1851.0 673.2 L1859.7 690.6 H1842.3 Z" fill="#80c342"/><path d="M1865.9 673.2 L1874.6 690.6 H1857.2 Z" fill="#80c342"/><path d="M1881.9 675.2 L1890.6 692.6 H1873.2 Z" fill="#80c342"/><path d="M1896.9 677.2 L1905.6 694.6 H1888.2 Z" fill="#80c342"/><path d="M1912.9 677.2 L1921.6 694.6 H1904.2 Z" fill="#80c342"/><path d="M1927.9 677.2 L1936.6 694.6 H1919.2 Z" fill="#80c342"/><path d="M1942.9 681.2 L1951.6 698.6 H1934.2 Z" fill="#80c342"/><path d="M1957.9 685.2 L1966.6 702.6 H1949.2 Z" fill="#80c342"/><path d="M1973.9 684.1 L1982.6 701.5 H1965.2 Z" fill="#80c342"/><path d="M1989.1 684.1 L1997.8 701.5 H1980.4 Z" fill="#80c342"/><rect x="1185.1" y="277.1" width="842" height="798.8" fill="none" stroke="#000" stroke-width="1.9"/><rect x="1211.95" y="1075.9" width="1.9" height="8.1" fill="#000"/><rect x="1332.95" y="1075.9" width="1.9" height="8.1" fill="#000"/><rect x="1453.95" y="1075.9" width="1.9" height="8.1" fill="#000"/><rect x="1574.95" y="1075.9" width="1.9" height="8.1" fill="#000"/><rect x="1695.45" y="1075.9" width="1.9" height="8.1" fill="#000"/><rect x="1816.05" y="1075.9" width="1.9" height="8.1" fill="#000"/><rect x="1937.05" y="1075.9" width="1.9" height="8.1" fill="#000"/><rect x="1176.9" y="1039.00" width="8.2" height="1.9" fill="#000"/><rect x="1176.9" y="940.27" width="8.2" height="1.9" fill="#000"/><rect x="1176.9" y="841.54" width="8.2" height="1.9" fill="#000"/><rect x="1176.9" y="742.81" width="8.2" height="1.9" fill="#000"/><rect x="1176.9" y="644.08" width="8.2" height="1.9" fill="#000"/><rect x="1176.9" y="545.35" width="8.2" height="1.9" fill="#000"/><rect x="1176.9" y="446.62" width="8.2" height="1.9" fill="#000"/><rect x="1176.9" y="347.89" width="8.2" height="1.9" fill="#000"/><rect x="1814.6" y="289.6" width="200" height="76.2" rx="4.5" fill="#fff" fill-opacity="0.8" stroke="#cccccc" stroke-width="2"/><rect x="1821" y="306.25" width="52" height="3.5" fill="#dd5736"/><circle cx="1847.3" cy="308.2" r="8.25" fill="#dd5736"/><rect x="1821" y="341.15" width="52" height="3.5" fill="#80c342"/><path d="M1847 333.5 L1855.7 350.9 H1838.3 Z" fill="#80c342"/></svg>
<div class="t" style="left:1512.97px;top:233.64px;font-size:29.6px;line-height:38px;letter-spacing:1.019px;">Convergence</div>
<div class="t" style="left:1152.94px;top:1024.66px;font-size:24.2px;line-height:31px;transform:scaleX(1.1708);transform-origin:0 0;">0</div>
<div class="t" style="left:1152.51px;top:925.93px;font-size:24.2px;line-height:31px;transform:scaleX(1.2284);transform-origin:0 0;">2</div>
<div class="t" style="left:1153.39px;top:827.20px;font-size:24.2px;line-height:31px;transform:scaleX(1.1128);transform-origin:0 0;">4</div>
<div class="t" style="left:1152.53px;top:728.47px;font-size:24.2px;line-height:31px;transform:scaleX(1.2151);transform-origin:0 0;">6</div>
<div class="t" style="left:1152.78px;top:629.74px;font-size:24.2px;line-height:31px;transform:scaleX(1.1894);transform-origin:0 0;">8</div>
<div class="t" style="left:1139.48px;top:531.01px;font-size:24.2px;line-height:31px;letter-spacing:2.161px;">10</div>
<div class="t" style="left:1139.48px;top:432.28px;font-size:24.2px;line-height:31px;letter-spacing:2.403px;">12</div>
<div class="t" style="left:1139.48px;top:333.55px;font-size:24.2px;line-height:31px;letter-spacing:1.919px;">14</div>
<div class="t" style="left:1194.29px;top:1087.31px;font-size:24.2px;line-height:31px;letter-spacing:0.988px;">0.0</div>
<div class="t" style="left:1315.29px;top:1087.31px;font-size:24.2px;line-height:31px;letter-spacing:1.019px;">0.5</div>
<div class="t" style="left:1435.38px;top:1087.31px;font-size:24.2px;line-height:31px;letter-spacing:1.442px;">1.0</div>
<div class="t" style="left:1556.38px;top:1087.31px;font-size:24.2px;line-height:31px;letter-spacing:1.472px;">1.5</div>
<div class="t" style="left:1677.49px;top:1087.31px;font-size:24.2px;line-height:31px;letter-spacing:1.140px;">2.0</div>
<div class="t" style="left:1798.09px;top:1087.31px;font-size:24.2px;line-height:31px;letter-spacing:1.170px;">2.5</div>
<div class="t" style="left:1919.39px;top:1087.31px;font-size:24.2px;line-height:31px;letter-spacing:0.988px;">3.0</div>
<div class="t" style="left:1558.02px;top:1119.21px;font-size:24.2px;line-height:31px;letter-spacing:1.651px;">Time [s]</div>
<div class="t" style="left:1961.98px;top:1117.71px;font-size:24.2px;line-height:31px;letter-spacing:3.091px;">1e−5</div>
<div class="t" style="left:1889.66px;top:293.11px;font-size:24.2px;line-height:31px;letter-spacing:1.880px;">Minimum</div>
<div class="t" style="left:1889.66px;top:328.11px;font-size:24.2px;line-height:31px;letter-spacing:1.844px;">Maximum</div>
<div class="t" style="left:1115px;top:677px;width:0;height:0;"><div class="t" style="transform:translate(-50%,-50%) rotate(-90deg);transform-origin:50% 50%;left:0;top:0;font-size:24.2px;line-height:24px;letter-spacing:1.308px;margin-top:-0.5px">Normalised Current</div></div>
<div class="a" style="left:1034px;top:1206px;width:1114.2px;height:227.0px;border:1px solid #b2b2b2;border-top:2px solid #a6a6a6;background:#fff;overflow:hidden"></div>
<div class="a" style="left:1035px;top:1208px;width:1091px;height:35.5px;background:linear-gradient(180deg,#fbfbfb 0,#f0f0f0 55%,#e4e4e4 100%);border-bottom:2px solid #a8a8a8"></div>
<div class="a" style="left:1280.1px;top:1209px;width:1.2px;height:36px;background:#bdbdbd"></div>
<div class="a" style="left:1281.3px;top:1209px;width:1.2px;height:36px;background:#fdfdfd"></div>
<div class="a" style="left:1492.0px;top:1209px;width:1.2px;height:36px;background:#bdbdbd"></div>
<div class="a" style="left:1493.2px;top:1209px;width:1.2px;height:36px;background:#fdfdfd"></div>
<div class="a" style="left:1702.8px;top:1209px;width:1.2px;height:36px;background:#bdbdbd"></div>
<div class="a" style="left:1704.0px;top:1209px;width:1.2px;height:36px;background:#fdfdfd"></div>
<div class="a" style="left:1913.4px;top:1209px;width:1.2px;height:36px;background:#bdbdbd"></div>
<div class="a" style="left:1914.6px;top:1209px;width:1.2px;height:36px;background:#fdfdfd"></div>
<div class="a" style="left:1280.2px;top:1245.5px;width:1.6px;height:189.5px;background:#c8c8c8"></div>
<div class="a" style="left:1492.1px;top:1245.5px;width:1.6px;height:189.5px;background:#c8c8c8"></div>
<div class="a" style="left:1702.9px;top:1245.5px;width:1.6px;height:189.5px;background:#c8c8c8"></div>
<div class="a" style="left:1913.5px;top:1245.5px;width:1.6px;height:189.5px;background:#c8c8c8"></div>
<div class="a" style="left:2124.7px;top:1245.5px;width:1.6px;height:189.5px;background:#c8c8c8"></div>
<div class="a" style="left:1069px;top:1295.6px;width:1057px;height:1.7px;background:#c8c8c8"></div>
<div class="a" style="left:1069px;top:1346.4px;width:1057px;height:1.7px;background:#c8c8c8"></div>
<div class="a" style="left:1069px;top:1397.4px;width:1057px;height:1.7px;background:#c8c8c8"></div>
<div class="a" style="left:1035px;top:1245.5px;width:32.5px;height:49.4px;background:linear-gradient(180deg,#f7f7f7,#e9e9e9);border-right:1.6px solid #a9a9a9;border-bottom:1.6px solid #a9a9a9"></div>
<div class="t" style="left:1038.96px;top:1257.23px;font-size:23.0px;line-height:30px;font-weight:bold;">1</div>
<div class="a" style="left:1035px;top:1296.4px;width:32.5px;height:49.3px;background:linear-gradient(180deg,#f7f7f7,#e9e9e9);border-right:1.6px solid #a9a9a9;border-bottom:1.6px solid #a9a9a9"></div>
<div class="t" style="left:1038.65px;top:1308.13px;font-size:23.0px;line-height:30px;">2</div>
<div class="a" style="left:1035px;top:1347.2px;width:32.5px;height:49.5px;background:linear-gradient(180deg,#f7f7f7,#e9e9e9);border-right:1.6px solid #a9a9a9;border-bottom:1.6px solid #a9a9a9"></div>
<div class="t" style="left:1038.94px;top:1358.93px;font-size:23.0px;line-height:30px;">3</div>
<div class="a" style="left:1035px;top:1398.2px;width:32.5px;height:35.3px;background:linear-gradient(180deg,#f7f7f7,#e9e9e9);border-right:1.6px solid #a9a9a9;border-bottom:1.6px solid #a9a9a9"></div>
<div class="t" style="left:1039.28px;top:1409.93px;font-size:23.0px;line-height:30px;">4</div>
<div class="a" style="left:1070px;top:1246.3px;width:210.2px;height:49.4px;background:#308cc6"></div>
<div class="t" style="left:1074.90px;top:1254.63px;font-size:23.0px;line-height:30px;letter-spacing:-0.291px;color:#fff;">4.0389e-07</div>
<div class="t" style="left:1286.80px;top:1254.63px;font-size:23.0px;line-height:30px;letter-spacing:-0.303px;">0.0</div>
<div class="t" style="left:1498.70px;top:1254.63px;font-size:23.0px;line-height:30px;letter-spacing:-0.303px;">0.0</div>
<div class="t" style="left:1709.50px;top:1254.63px;font-size:23.0px;line-height:30px;letter-spacing:-0.249px;">14.7191</div>
<div class="t" style="left:1920.10px;top:1254.63px;font-size:23.0px;line-height:30px;letter-spacing:-0.030px;">0.184011</div>
<div class="t" style="left:1074.90px;top:1305.53px;font-size:23.0px;line-height:30px;letter-spacing:-0.283px;">1.09784e-06</div>
<div class="t" style="left:1286.80px;top:1305.53px;font-size:23.0px;line-height:30px;letter-spacing:-0.236px;">0.00539284</div>
<div class="t" style="left:1498.70px;top:1305.53px;font-size:23.0px;line-height:30px;letter-spacing:-0.236px;">0.00693167</div>
<div class="t" style="left:1709.50px;top:1305.53px;font-size:23.0px;line-height:30px;letter-spacing:-0.249px;">13.4818</div>
<div class="t" style="left:1920.10px;top:1305.53px;font-size:23.0px;line-height:30px;letter-spacing:-0.243px;">0.394485</div>
<div class="t" style="left:1074.90px;top:1356.33px;font-size:23.0px;line-height:30px;letter-spacing:-0.283px;">1.78247e-06</div>
<div class="t" style="left:1286.80px;top:1356.33px;font-size:23.0px;line-height:30px;letter-spacing:-0.239px;">0.0290969</div>
<div class="t" style="left:1498.70px;top:1356.33px;font-size:23.0px;line-height:30px;letter-spacing:-0.239px;">0.0157789</div>
<div class="t" style="left:1709.50px;top:1356.33px;font-size:23.0px;line-height:30px;letter-spacing:-0.255px;">12.831</div>
<div class="t" style="left:1920.10px;top:1356.33px;font-size:23.0px;line-height:30px;letter-spacing:-0.243px;">0.301379</div>
<div class="t" style="left:1074.90px;top:1407.33px;font-size:23.0px;line-height:30px;letter-spacing:-0.283px;clip-path:inset(0 0 5.5px 0);">2.46756e-06</div>
<div class="t" style="left:1286.80px;top:1407.33px;font-size:23.0px;line-height:30px;letter-spacing:-0.239px;clip-path:inset(0 0 5.5px 0);">0.0368416</div>
<div class="t" style="left:1498.70px;top:1407.33px;font-size:23.0px;line-height:30px;letter-spacing:-0.239px;clip-path:inset(0 0 5.5px 0);">0.0186639</div>
<div class="t" style="left:1709.50px;top:1407.33px;font-size:23.0px;line-height:30px;letter-spacing:-0.249px;clip-path:inset(0 0 5.5px 0);">12.4152</div>
<div class="t" style="left:1920.10px;top:1407.33px;font-size:23.0px;line-height:30px;letter-spacing:-0.243px;clip-path:inset(0 0 5.5px 0);">0.224561</div>
<div class="t" style="left:1136.37px;top:1213.33px;font-size:23.0px;line-height:30px;letter-spacing:-0.311px;font-weight:bold;">Time[s]</div>
<div class="t" style="left:1549.94px;top:1213.33px;font-size:23.0px;line-height:30px;letter-spacing:-0.350px;transform:scaleX(0.9665);transform-origin:0 0;">CI(70%%)</div>
<div class="t" style="left:1962.83px;top:1213.33px;font-size:23.0px;line-height:30px;letter-spacing:-0.350px;transform:scaleX(0.9344);transform-origin:0 0;">CI(70%%).1</div>
<div class="a" style="left:1282.2px;top:1209px;width:209.3px;height:36px;overflow:hidden"><div class="t" style="left:7.25px;top:4.33px;font-size:23.0px;line-height:30px;letter-spacing:0.181px;">t_Density_Minimum</div><div class="t" style="left:-62.95px;top:4.33px;font-size:23.0px;line-height:30px;letter-spacing:0.065px;">Curren</div></div>
<div class="a" style="left:1709px;top:1209px;width:203.8px;height:36px;overflow:hidden"><div class="t" style="left:0.75px;top:4.33px;font-size:23.0px;line-height:30px;letter-spacing:-0.093px;">t_Density_Maximum</div></div>
<div class="a" style="left:2126.4px;top:1208.0px;width:22.8px;height:227.0px;background:linear-gradient(90deg,#d8d8d8 0,#dadada 80%,#e0e0e0 100%);border-left:1.5px solid #b2b2b2;box-sizing:border-box"></div>
<div class="a" style="left:2127.6px;top:1208.0px;width:21.6px;height:22.6px;background:linear-gradient(180deg,#f7f7f7,#ededed);border-bottom:1.4px solid #b2b2b2"></div>
<div class="a" style="left:2127.6px;top:1231.8px;width:21.6px;height:44.4px;background:linear-gradient(90deg,#fdfdfd,#ebebeb);border-bottom:1.4px solid #b2b2b2"></div>
<div class="a" style="left:2127.6px;top:1410.2px;width:21.6px;height:23.4px;background:linear-gradient(180deg,#f7f7f7,#ededed);border-top:1.4px solid #b2b2b2"></div>
<svg class="a" style="left:2128px;top:1210px" width="22" height="225"><path d="M3.4 12.6 L16.4 12.6 L9.9 5.8 Z" fill="#5e5e5e"/><path d="M3.4 210.2 L16.4 210.2 L9.9 217 Z" fill="#5e5e5e"/></svg>
<svg class="a" style="left:2140px;top:1464px" width="27" height="27" viewBox="2140 1464 27 27"><rect x="2160.9" y="1471.6" width="3.8" height="2.0" fill="#f0f0f0"/><rect x="2161.0" y="1470.0" width="2.0" height="1.8" fill="#b2b2b2"/><rect x="2155.9" y="1476.6" width="3.8" height="2.0" fill="#f0f0f0"/><rect x="2156.0" y="1475.0" width="2.0" height="1.8" fill="#b2b2b2"/><rect x="2160.9" y="1476.6" width="3.8" height="2.0" fill="#f0f0f0"/><rect x="2161.0" y="1475.0" width="2.0" height="1.8" fill="#b2b2b2"/><rect x="2150.9" y="1482.1" width="3.8" height="2.0" fill="#f0f0f0"/><rect x="2151.0" y="1480.5" width="2.0" height="1.8" fill="#b2b2b2"/><rect x="2155.9" y="1482.1" width="3.8" height="2.0" fill="#f0f0f0"/><rect x="2156.0" y="1480.5" width="2.0" height="1.8" fill="#b2b2b2"/><rect x="2160.9" y="1482.1" width="3.8" height="2.0" fill="#f0f0f0"/><rect x="2161.0" y="1480.5" width="2.0" height="1.8" fill="#b2b2b2"/><rect x="2145.9" y="1487.1" width="3.8" height="2.0" fill="#f0f0f0"/><rect x="2146.0" y="1485.5" width="2.0" height="1.8" fill="#b2b2b2"/><rect x="2150.9" y="1487.1" width="3.8" height="2.0" fill="#f0f0f0"/><rect x="2151.0" y="1485.5" width="2.0" height="1.8" fill="#b2b2b2"/><rect x="2155.9" y="1487.1" width="3.8" height="2.0" fill="#f0f0f0"/><rect x="2156.0" y="1485.5" width="2.0" height="1.8" fill="#b2b2b2"/><rect x="2160.9" y="1487.1" width="3.8" height="2.0" fill="#f0f0f0"/><rect x="2161.0" y="1485.5" width="2.0" height="1.8" fill="#b2b2b2"/><path d="M2167 1486.3 Q2164.6 1488.2 2162.4 1491 L2167 1491 Z" fill="#000"/></svg>
<svg class="a" style="left:0;top:1485px" width="6" height="6"><path d="M0 0.6 Q2.4 3 4.6 6 L0 6 Z" fill="#000"/></svg>
</body></html>
